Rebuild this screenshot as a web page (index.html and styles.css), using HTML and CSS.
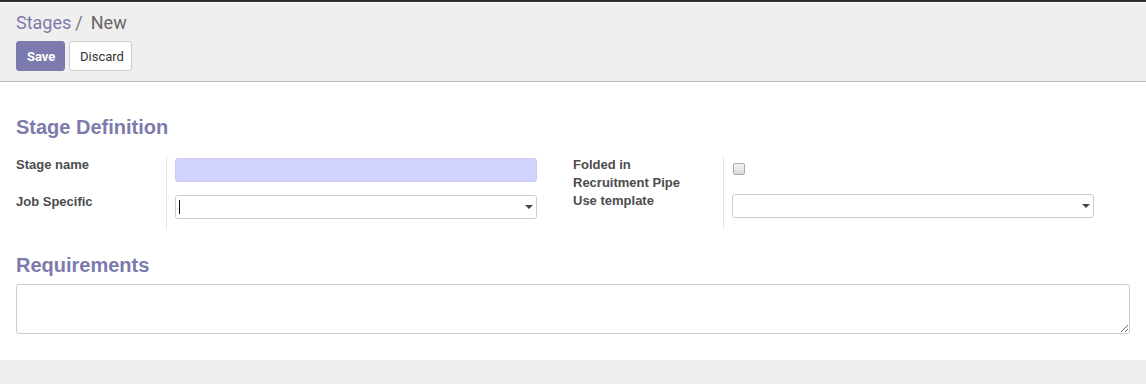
FILE: index.html
```html
<!DOCTYPE html>
<html lang="en">

<head>
    <meta charset="UTF-8">
    <title>Stages - New</title>
    <link rel="stylesheet" href="styles.css">
</head>

<body>

    <div class="control-panel">
        <div class="breadcrumb">
            <a class="crumb-link" href="#">Stages</a><span class="crumb-sep">/</span><span class="crumb-active">New</span>
        </div>
        <div class="buttons">
            <button class="btn btn-primary" type="button">Save</button>
            <button class="btn btn-default" type="button">Discard</button>
        </div>
    </div>

    <div class="sheet">
        <h2 class="section-title">Stage Definition</h2>

        <div class="groups">
            <div class="group">
                <div class="field-row">
                    <label class="field-label">Stage name</label>
                    <div class="field-cell">
                        <input class="input input-required" type="text">
                    </div>
                </div>
                <div class="field-row">
                    <label class="field-label">Job Specific</label>
                    <div class="field-cell">
                        <div class="select">
                            <span class="text-cursor"></span>
                            <span class="caret"></span>
                        </div>
                    </div>
                </div>
            </div>

            <div class="group">
                <div class="field-row">
                    <label class="field-label">Folded in Recruitment Pipe</label>
                    <div class="field-cell">
                        <input class="checkbox" type="checkbox">
                    </div>
                </div>
                <div class="field-row">
                    <label class="field-label">Use template</label>
                    <div class="field-cell">
                        <div class="select">
                            <span></span>
                            <span class="caret"></span>
                        </div>
                    </div>
                </div>
            </div>
        </div>

        <h2 class="section-title section-title-spaced">Requirements</h2>
        <textarea class="textarea"></textarea>
    </div>

</body>

</html>
```

FILE: styles.css
```css
body {
    font-family: 'Liberation Sans', Arial, sans-serif;
    background-color: #f0eeee;
    margin: 0;
    padding: 0;
    color: #4c4c4c;
    font-size: 13px;
}

.control-panel {
    background-color: #f0eeee;
    border-top: 2px solid #2e2e2e;
    border-bottom: 1px solid #bdbdbd;
    padding: 9px 16px 10px 16px;
    box-shadow: inset 0 1px 0 #fafafa;
}

.breadcrumb {
    font-family: 'Roboto', 'Liberation Sans', sans-serif;
    font-size: 18px;
    line-height: 24px;
    height: 24px;
}

.crumb-link {
    color: #7c7bad;
    text-decoration: none;
}

.crumb-sep {
    color: #777;
    margin: 0 8px 0 4px;
}

.crumb-active {
    color: #666;
}

.buttons {
    display: flex;
    gap: 4px;
    margin-top: 6px;
}

.btn {
    font-family: 'Roboto', 'Liberation Sans', sans-serif;
    font-size: 13px;
    height: 30px;
    padding: 0 10px;
    border-radius: 3px;
    cursor: pointer;
}

.btn-primary {
    background-color: #7c7bad;
    border: 1px solid #7c7bad;
    color: white;
    font-weight: bold;
    width: 49px;
}

.btn-default {
    background-color: white;
    border: 1px solid #cccccc;
    color: #333;
    width: 63px;
}

.sheet {
    background-color: white;
    padding: 31px 16px 26px 16px;
}

.section-title {
    margin: 0;
    font-size: 20px;
    line-height: 28px;
    font-weight: bold;
    color: #7c7bad;
}

.section-title-spaced {
    margin-top: 21px;
}

.groups {
    display: grid;
    grid-template-columns: 1fr 1fr;
    margin-top: 15px;
}

.group {
    padding-right: 36px;
}

.field-row {
    display: grid;
    grid-template-columns: 151px 1fr;
}

.field-label {
    font-weight: bold;
    line-height: 18px;
    color: #4c4c4c;
    border-right: 1px solid #e6e6e6;
    padding-right: 14px;
}

.field-cell {
    padding: 2px 0 11px 8px;
}

.input {
    display: block;
    box-sizing: border-box;
    width: 100%;
    height: 24px;
    border: 1px solid #cccccc;
    border-radius: 3px;
    font-family: inherit;
    font-size: 13px;
}

.input-required {
    background-color: #d2d2ff;
    border-color: #cbcbf5;
}

.select {
    box-sizing: border-box;
    height: 24px;
    border: 1px solid #cccccc;
    border-radius: 3px;
    background-color: white;
    display: flex;
    align-items: center;
    justify-content: space-between;
    padding: 0 3px 0 3px;
}

.text-cursor {
    width: 1px;
    height: 14px;
    background-color: #111;
}

.caret {
    width: 0;
    height: 0;
    border-left: 4px solid transparent;
    border-right: 4px solid transparent;
    border-top: 4px solid #444;
}

.checkbox {
    appearance: none;
    -webkit-appearance: none;
    display: block;
    width: 12px;
    height: 12px;
    margin: 5px 0 0 1px;
    border: 1px solid #a9a9a9;
    border-radius: 2px;
    background: linear-gradient(#f2f2f2, #dcdcdc);
    box-sizing: border-box;
}

.textarea {
    display: block;
    box-sizing: border-box;
    width: 100%;
    height: 50px;
    margin-top: 5px;
    border: 1px solid #cccccc;
    border-radius: 3px;
    font-family: inherit;
    font-size: 13px;
}
```
